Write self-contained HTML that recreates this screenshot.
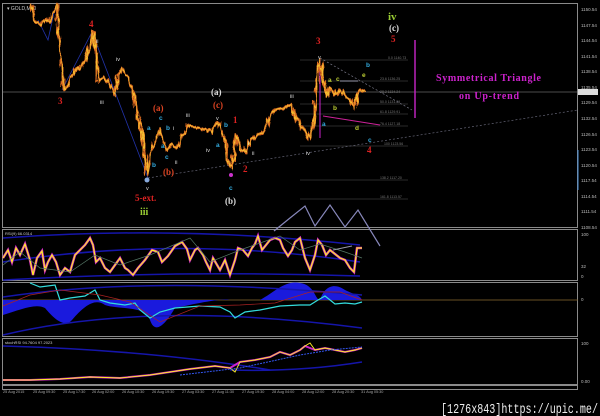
<!DOCTYPE html>
<html><head><meta charset="utf-8"><style>
html,body{margin:0;padding:0;background:#000;width:600px;height:416px;overflow:hidden}
</style></head><body>
<svg width="600" height="416" viewBox="0 0 600 416" xmlns="http://www.w3.org/2000/svg" font-family="Liberation Sans, sans-serif">
<defs>
<filter id="jag" x="-5%" y="-5%" width="110%" height="110%">
<feTurbulence type="fractalNoise" baseFrequency="0.35 0.08" numOctaves="2" seed="3"/>
<feDisplacementMap in="SourceGraphic" scale="7" xChannelSelector="R" yChannelSelector="G"/>
</filter>
</defs>
<rect width="600" height="416" fill="#000"/>
<g fill="none" stroke="#8a8a8a" stroke-width="1">
<rect x="2.5" y="3.5" width="575" height="224"/>
<rect x="2.5" y="229.5" width="575" height="51"/>
<rect x="2.5" y="282.5" width="575" height="54"/>
<rect x="2.5" y="338.5" width="575" height="46"/>
<rect x="2.5" y="385.5" width="575" height="4"/>
</g>
<text x="7" y="10" font-size="5" fill="#ccc">▾ GOLD,M30</text>
<g font-size="4.5" fill="#bbb">
<text x="581" y="11">1150.54</text><text x="581" y="27">1147.54</text><text x="581" y="42">1144.54</text><text x="581" y="58">1141.54</text><text x="581" y="73">1138.54</text><text x="581" y="89">1135.54</text><text x="581" y="120">1132.54</text><text x="581" y="104">1129.54</text><text x="581" y="136">1126.54</text><text x="581" y="151">1123.54</text><text x="581" y="167">1120.54</text><text x="581" y="182">1117.54</text><text x="581" y="198">1114.54</text><text x="581" y="213">1111.54</text><text x="581" y="229">1108.54</text>
<text x="581" y="236">100</text><text x="581" y="268">32</text><text x="581" y="278">0</text><text x="581" y="301">0</text><text x="581" y="345">100</text><text x="581" y="383">0.00</text>
</g>
<rect x="578" y="89" width="20" height="6" fill="#ddd"/>
<line x1="578" y1="150" x2="578" y2="190" stroke="#4a90d9" stroke-width="1"/>
<line x1="3" y1="92" x2="578" y2="92" stroke="#999" stroke-width="0.6"/>
<g stroke="#555" stroke-width="0.5">
<line x1="300" y1="60" x2="408" y2="60"/><line x1="300" y1="81" x2="408" y2="81"/><line x1="300" y1="104" x2="408" y2="104"/><line x1="300" y1="114" x2="408" y2="114"/><line x1="300" y1="126" x2="408" y2="126"/><line x1="300" y1="146" x2="408" y2="146"/><line x1="300" y1="180" x2="408" y2="180"/><line x1="300" y1="199" x2="408" y2="199"/>
</g>
<g font-size="3.5" fill="#777">
<text x="388" y="59">0.0 1140.73</text><text x="380" y="80">23.6 1136.25</text><text x="380" y="93">38.2 1134.24</text><text x="380" y="103">50.0 1131.29</text><text x="380" y="113">61.8 1129.91</text><text x="380" y="125">76.4 1127.18</text><text x="384" y="145">100 1123.56</text><text x="380" y="179">138.2 1117.20</text><text x="380" y="198">161.8 1113.57</text>
</g>
<polyline points="38,20 48,40 55,8" fill="none" stroke="#2233aa" stroke-width="0.8"/>
<polyline points="62,90 92,32 148,178" fill="none" stroke="#2233aa" stroke-width="0.8"/>
<line x1="148" y1="178" x2="578" y2="110" stroke="#667" stroke-width="0.7" stroke-dasharray="2,2"/>
<line x1="320" y1="58" x2="412" y2="110" stroke="#778" stroke-width="0.7" stroke-dasharray="2,2"/>
<line x1="323" y1="116" x2="380" y2="125" stroke="#cc2299" stroke-width="0.9"/>
<line x1="320" y1="60" x2="320" y2="138" stroke="#cc22cc" stroke-width="1"/>
<line x1="415" y1="40" x2="415" y2="118" stroke="#bb22bb" stroke-width="1.5"/>
<line x1="340" y1="81" x2="358" y2="81" stroke="#99a" stroke-width="1"/>
<g filter="url(#jag)">
<polyline points="31,5 35,20 40,25 45,18 50,22 55,8 57,5 60,50 63,85 66,90 70,80 75,70 80,68 85,60 90,45 93,32 96,50 98,80 105,78 110,85 115,95 118,75 122,70 128,78 133,90 138,115 143,140 147,175 150,155 155,140 160,130 163,140 167,150 172,145 177,148 182,135 188,125 195,128 205,130 212,132 217,122 220,125 225,140 229,165 232,170 236,135 240,150 245,152 250,140 258,135 265,130 270,115 275,110 283,108 290,105 295,115 300,125 305,130 310,140 314,120 318,70 320,60 323,80 327,95 330,88 335,95 340,90 345,95 350,100 355,108 357,95 361,90 365,92" fill="none" stroke="#d86a20" stroke-width="3" stroke-linejoin="round"/>
<polyline points="31,5 35,20 40,25 45,18 50,22 55,8 57,5 60,50 63,85 66,90 70,80 75,70 80,68 85,60 90,45 93,32 96,50 98,80 105,78 110,85 115,95 118,75 122,70 128,78 133,90 138,115 143,140 147,175 150,155 155,140 160,130 163,140 167,150 172,145 177,148 182,135 188,125 195,128 205,130 212,132 217,122 220,125 225,140 229,165 232,170 236,135 240,150 245,152 250,140 258,135 265,130 270,115 275,110 283,108 290,105 295,115 300,125 305,130 310,140 314,120 318,70 320,60 323,80 327,95 330,88 335,95 340,90 345,95 350,100 355,108 357,95 361,90 365,92" fill="none" stroke="#f5c030" stroke-width="1"/>
</g>
<circle cx="147" cy="180" r="2.5" fill="#88aadd"/>
<circle cx="231" cy="175" r="2" fill="#cc33cc"/>
<g style="font-family:'Liberation Serif',serif;font-weight:bold" font-size="9">
<text x="58" y="104" fill="#dd2222">3</text>
<text x="89" y="27" fill="#dd2222">4</text>
<text x="135" y="201" fill="#dd2222">5-ext.</text>
<text x="140" y="215" fill="#99cc33" font-size="10">iii</text>
<text x="153" y="111" fill="#dd4422">(a)</text>
<text x="163" y="175" fill="#dd4422">(b)</text>
<text x="211" y="95" fill="#ddd">(a)</text>
<text x="213" y="108" fill="#dd4422">(c)</text>
<text x="225" y="204" fill="#ddd">(b)</text>
<text x="233" y="123" fill="#dd2222">1</text>
<text x="243" y="172" fill="#dd2222">2</text>
<text x="316" y="44" fill="#dd2222">3</text>
<text x="391" y="42" fill="#dd2222">5</text>
<text x="367" y="153" fill="#dd2222">4</text>
<text x="388" y="20" fill="#99cc33" font-size="11">iv</text>
<text x="389" y="31" fill="#ddd">(c)</text>
</g>
<g font-size="6.5" font-weight="bold" fill="#33aadd">
<text x="147" y="130">a</text><text x="152" y="167">b</text><text x="159" y="120">c</text><text x="161" y="148">a</text><text x="166" y="130">b</text><text x="165" y="159">c</text><text x="216" y="147">a</text><text x="224" y="127">b</text><text x="229" y="190">c</text><text x="322" y="126">a</text><text x="366" y="67">b</text><text x="368" y="142">c</text>
</g>
<g font-size="5.5" fill="#ddd">
<text x="116" y="61">iv</text><text x="96" y="43">ii</text><text x="100" y="104">iii</text><text x="186" y="117">iii</text><text x="175" y="164">ii</text><text x="173" y="130">i</text><text x="206" y="152">iv</text><text x="216" y="120">v</text><text x="146" y="190">v</text><text x="252" y="155">ii</text><text x="248" y="145">i</text><text x="290" y="98">iii</text><text x="306" y="155">iv</text><text x="318" y="59">v</text>
</g>
<g font-size="6.5" font-weight="bold" fill="#bbcc33"><text x="328" y="82">a</text><text x="336" y="81">c</text><text x="333" y="110">b</text><text x="355" y="130">d</text><text x="362" y="77">e</text></g>
<text x="436" y="81" style="font-family:'Liberation Serif',serif;font-weight:bold" font-size="10" textLength="105" fill="#cc22cc">Symmetrical Triangle</text>
<text x="459" y="99" style="font-family:'Liberation Serif',serif;font-weight:bold" font-size="10" textLength="60" fill="#cc22cc">on  Up-trend</text>
<polyline points="274,231 290,218 305,206 315,226 330,205 345,227 358,210 380,246" fill="none" stroke="#8888bb" stroke-width="1.2"/>
<text x="5" y="235" font-size="4" fill="#ccc">RSI(9) 66.0314</text>
<path d="M3,238 Q180,225 360,245" fill="none" stroke="#1515aa" stroke-width="1.5"/>
<path d="M3,262 Q180,235 360,262" fill="none" stroke="#1515aa" stroke-width="1.5"/>
<path d="M3,280 Q180,270 360,276" fill="none" stroke="#1515aa" stroke-width="1.5"/>
<polyline points="3,258 8,250 12,262 16,248 20,255 25,244 30,260 33,275 37,258 42,251 45,270 48,262 52,255 56,262 60,275 65,268 70,272 75,255 80,250 85,245 90,238 93,245 96,262 100,258 105,268 110,272 115,265 120,258 125,268 128,270 133,275 138,268 145,260 152,250 158,252 162,262 168,256 175,246 182,242 187,249 190,260 195,250 198,248 203,255 206,262 210,270 213,258 220,270 225,260 230,275 235,260 238,248 243,250 248,256 252,248 255,244 258,236 262,250 266,245 270,240 275,238 280,240 283,248 288,256 292,250 295,242 300,238 305,258 310,270 315,255 318,240 322,245 326,255 330,250 335,254 340,258 345,260 350,268 354,272 357,248 362,248" fill="none" stroke="#cc22cc" stroke-width="2.5"/>
<polyline points="3,258 8,250 12,262 16,248 20,255 25,244 30,260 33,275 37,258 42,251 45,270 48,262 52,255 56,262 60,275 65,268 70,272 75,255 80,250 85,245 90,238 93,245 96,262 100,258 105,268 110,272 115,265 120,258 125,268 128,270 133,275 138,268 145,260 152,250 158,252 162,262 168,256 175,246 182,242 187,249 190,260 195,250 198,248 203,255 206,262 210,270 213,258 220,270 225,260 230,275 235,260 238,248 243,250 248,256 252,248 255,244 258,236 262,250 266,245 270,240 275,238 280,240 283,248 288,256 292,250 295,242 300,238 305,258 310,270 315,255 318,240 322,245 326,255 330,250 335,254 340,258 345,260 350,268 354,272 357,248 362,248" fill="none" stroke="#ffee22" stroke-width="1.2"/>
<polyline points="3,265 20,252 40,268 70,272 95,255 120,265 150,255 190,238 210,262 240,250 280,236 300,250 320,244 345,252 362,258" fill="none" stroke="#557766" stroke-width="0.7"/>
<polyline points="333,250 352,246" stroke="#99a" fill="none"/>
<line x1="3" y1="300" x2="578" y2="300" stroke="#8a6a30" stroke-width="0.8"/>
<path d="M3,300 L3,315 C20,310 35,303 45,308 C55,320 65,328 72,320 C85,305 95,298 105,305 C120,310 145,305 150,320 C155,335 165,325 175,308 C190,305 220,298 230,300 L240,300 L260,300 C275,292 285,280 300,283 C315,285 315,300 320,300 C325,285 335,283 345,290 C355,295 360,295 362,300 Z" fill="#1a1add"/>
<path d="M3,297 Q150,275 362,295" fill="none" stroke="#1515aa" stroke-width="1.5"/>
<path d="M3,335 Q150,300 362,328" fill="none" stroke="#1515aa" stroke-width="1.5"/>
<polyline points="30,283 40,287 55,285 60,300 70,298 85,296 95,290 100,300 110,303 125,305 135,303 140,310 150,318 160,312 175,308 200,306 220,307 230,312 235,318 245,312 260,310 280,306 300,305 310,305 318,300 325,296 335,304 345,303 355,304 362,302" fill="none" stroke="#33dddd" stroke-width="1.2"/>
<polyline points="3,306 30,295 60,290 100,295 130,302 160,322 200,306 240,305 275,303 310,292 340,292 362,300" fill="none" stroke="#aa2222" stroke-width="0.7"/>
<text x="5" y="344" font-size="4" fill="#ccc">stochRSI 94.7604 97.2023</text>
<path d="M3,346 Q150,350 270,370" fill="none" stroke="#1515aa" stroke-width="1.5"/>
<path d="M230,370 Q300,372 362,362" fill="none" stroke="#1515aa" stroke-width="1.5"/>
<polyline points="3,380 30,380 60,379 90,377 120,378 150,375 170,372 190,369 215,366 230,368 240,362 255,360 270,357 280,352 290,355 300,350 305,346 315,350 325,348 335,350 345,352 355,350 362,348" fill="none" stroke="#cc22cc" stroke-width="2"/>
<polyline points="3,380 30,380 60,379 90,377 120,378 150,375 170,372 190,369 215,366 230,368 235,372 240,362 255,360 270,357 280,352 290,355 300,350 305,346 310,343 315,350 325,348 335,350 345,352 355,350 362,348" fill="none" stroke="#ffee22" stroke-width="0.9"/>
<polyline points="180,375 240,368 300,355 330,350 362,347" fill="none" stroke="#3355ee" stroke-width="1" stroke-dasharray="2,1"/>
<g font-size="3.8" fill="#aaa">
<text x="3" y="393">25 Aug 2015</text><text x="33" y="393">25 Aug 09:30</text><text x="63" y="393">25 Aug 17:30</text><text x="92" y="393">26 Aug 02:00</text><text x="122" y="393">26 Aug 10:30</text><text x="152" y="393">26 Aug 19:30</text><text x="182" y="393">27 Aug 03:30</text><text x="212" y="393">27 Aug 11:30</text><text x="242" y="393">27 Aug 19:30</text><text x="272" y="393">28 Aug 04:00</text><text x="302" y="393">28 Aug 12:00</text><text x="332" y="393">28 Aug 20:30</text><text x="361" y="393">31 Aug 05:30</text>
</g>
<text x="441" y="413" style="font-family:'Liberation Mono',monospace" font-size="14" textLength="157" lengthAdjust="spacingAndGlyphs" fill="#eee">[1276x843]https://upic.me/</text>
</svg>
</body></html>
